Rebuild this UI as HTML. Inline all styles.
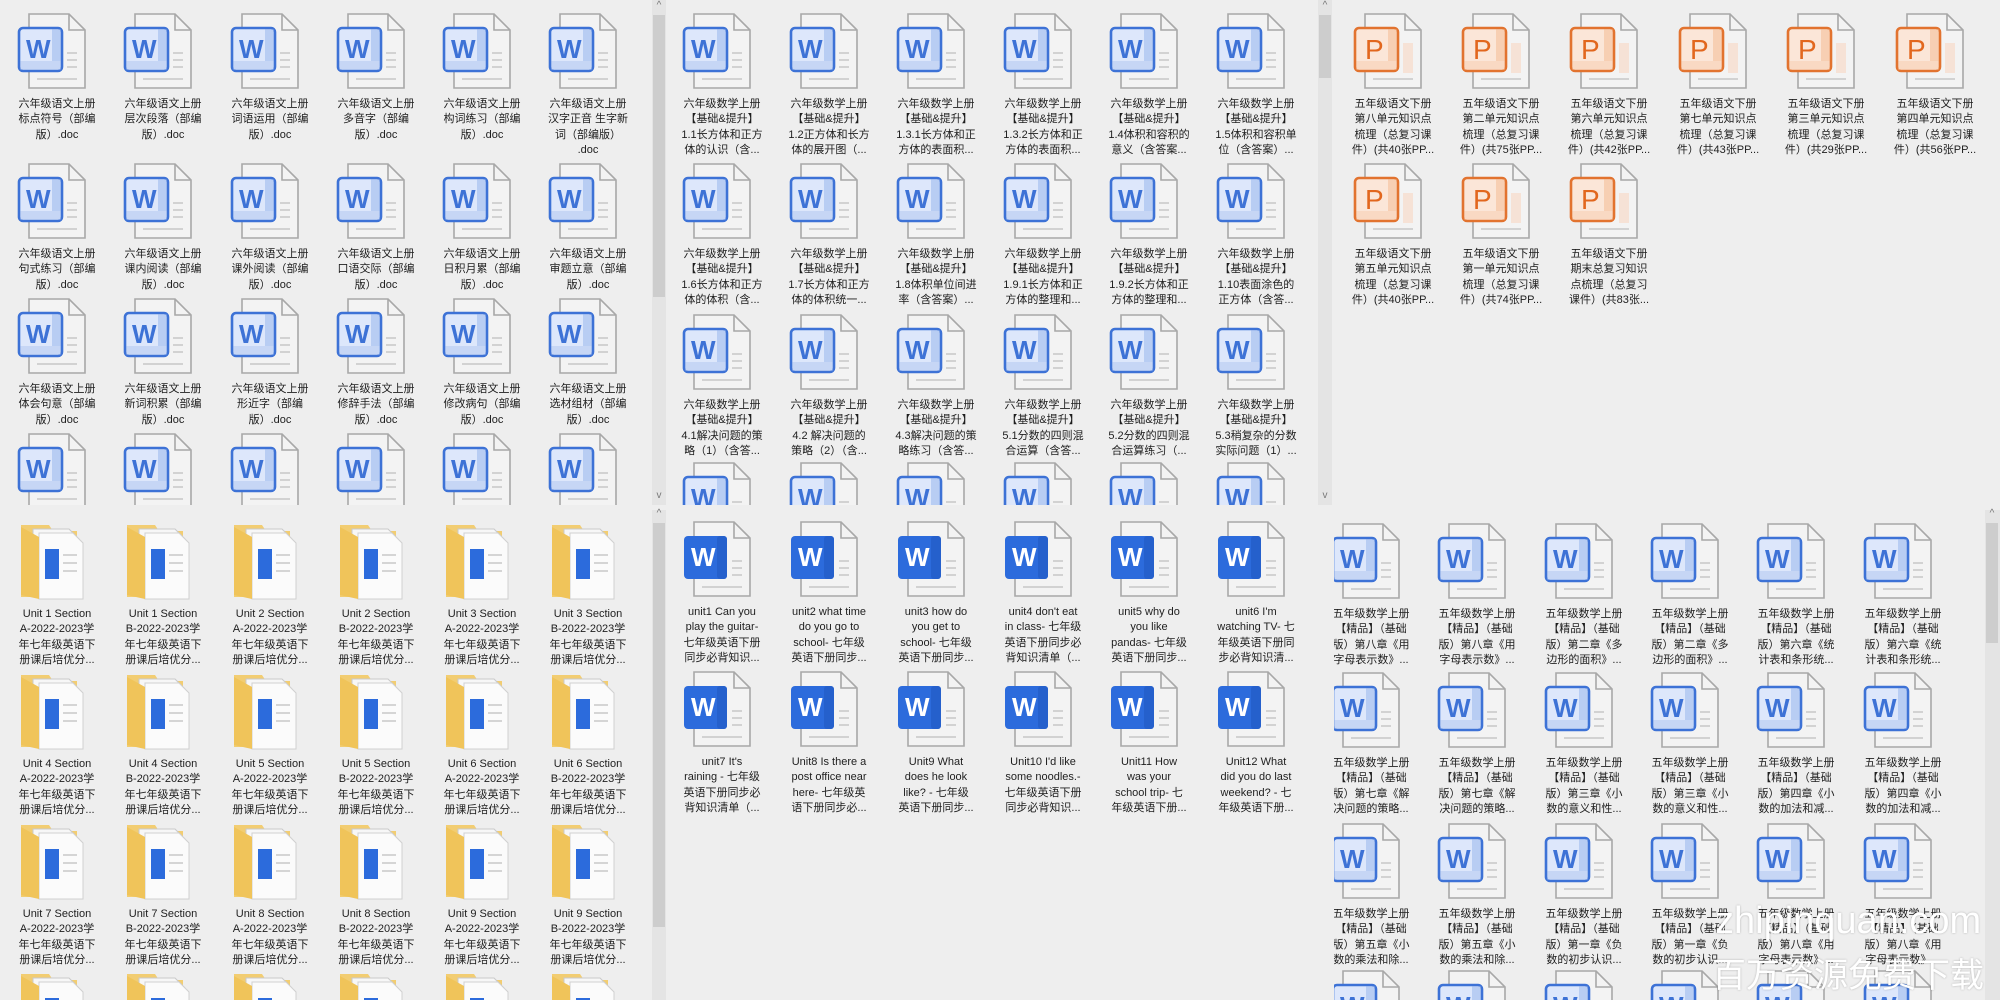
<!DOCTYPE html>
<html><head><meta charset="utf-8"><style>
html{margin:0;padding:0;width:2000px;height:1000px;overflow:hidden}
body{margin:0;padding:0;width:2000px;height:1000px;background:#eeeeee;position:relative;overflow:hidden;font-family:"Liberation Sans","Noto Sans CJK SC",sans-serif}
.pn{position:absolute;left:0;top:0;width:2000px;height:1000px;overflow:hidden}
.i{position:absolute;width:100px;height:28px}
.i svg{position:absolute;left:10px;top:0;width:70px;height:76px;overflow:visible}
.i p{position:absolute;left:-4px;top:84px;width:108px;margin:0;font-size:11px;line-height:15.3px;color:#1e1e1e;text-align:center;white-space:nowrap}
svg text{font:bold 26px "Liberation Sans",sans-serif;fill:#3d72d6}
.d svg text{fill:#fff}
.pp svg text{fill:#e2671e;font-weight:normal;font-size:28px}
.sb{position:absolute;background:#e4e4e4}
.th{position:absolute;background:#cdcdcd}
.ar{position:absolute;font-size:10px;color:#777;width:14px;text-align:center}
.wm{position:absolute;color:#fff;text-shadow:0 0 2px rgba(0,0,0,.25);white-space:nowrap}
</style></head><body>
<svg width="0" height="0" style="position:absolute">
<defs>
<g id="pg"><path d="M12 1h40l16 16v58H12z" fill="#f3f3f3" stroke="#a8a8a8" stroke-width="1.6"/><path d="M52 1v16h16" fill="none" stroke="#a8a8a8" stroke-width="1.6"/><path d="M50 40h10M50 47h10M50 54h10M20 66h40" stroke="#d2d2d2" stroke-width="2"/></g>
<g id="wl"><use href="#pg"/><rect x="2" y="15" width="43" height="43" rx="4" fill="#dde7fb" stroke="#3d72d6" stroke-width="2.6"/><rect x="35" y="16.5" width="8.5" height="40" fill="#b8cdf3"/><rect x="3.5" y="48" width="40" height="8.5" fill="#c6d6f5"/></g>
<g id="wd"><use href="#pg"/><rect x="2" y="15" width="43" height="43" rx="4" fill="#2c6bdc"/><rect x="35" y="15" width="10" height="43" rx="3" fill="#2560cc"/></g>
<g id="pp"><use href="#pg"/><rect x="2" y="15" width="43" height="43" rx="4" fill="#fbe6d8" stroke="#e2732f" stroke-width="2.6"/><rect x="35" y="16.5" width="8.5" height="40" fill="#f7cfb3"/><rect x="3.5" y="48" width="40" height="8.5" fill="#f9d9c3"/><rect x="50" y="30" width="10" height="30" fill="#f6e2d6"/></g>
<g id="fd"><path d="M4 2h28l4 6h24v66H4z" fill="#f2cd72"/><path d="M16 6h36l10 10v58H16z" fill="#f7f7f7" stroke="#c9c9c9"/><path d="M22 10h34l10 10v56H22z" fill="#fbfbfb" stroke="#d0d0d0"/><rect x="28" y="26" width="14" height="30" fill="#2c6bdc"/><path d="M46 32h14M46 40h14M46 48h14" stroke="#d5d5d5" stroke-width="2"/><path d="M4 4l18 10v62L4 72z" fill="#f0c45a"/></g>
</defs></svg>

<div class="sb" style="left:652px;top:0;width:14px;height:505px"></div><div class="th" style="left:653px;top:15px;width:12px;height:282px"></div>
<div class="ar" style="left:652px;top:0">^</div><div class="ar" style="left:652px;top:490px">v</div>
<div class="sb" style="left:652px;top:510px;width:14px;height:490px"></div><div class="th" style="left:653px;top:523px;width:12px;height:404px"></div>
<div class="ar" style="left:652px;top:508px">^</div>
<div class="sb" style="left:1318px;top:0;width:14px;height:505px"></div><div class="th" style="left:1319px;top:15px;width:12px;height:63px"></div>
<div class="ar" style="left:1318px;top:0">^</div><div class="ar" style="left:1318px;top:490px">v</div>
<div class="sb" style="left:1985px;top:510px;width:15px;height:490px"></div><div class="th" style="left:1986px;top:523px;width:12px;height:120px"></div>
<div class="ar" style="left:1985px;top:508px">^</div>

<div class="pn" style="clip-path:inset(0 1350px 495px 0)">
<div class="i" style="left:7px;top:13px"><svg><use href="#wl"/><text x="9" y="45">W</text></svg><p>六年级语文上册<br>标点符号（部编<br>版）.doc</p></div>
<div class="i" style="left:113px;top:13px"><svg><use href="#wl"/><text x="9" y="45">W</text></svg><p>六年级语文上册<br>层次段落（部编<br>版）.doc</p></div>
<div class="i" style="left:220px;top:13px"><svg><use href="#wl"/><text x="9" y="45">W</text></svg><p>六年级语文上册<br>词语运用（部编<br>版）.doc</p></div>
<div class="i" style="left:326px;top:13px"><svg><use href="#wl"/><text x="9" y="45">W</text></svg><p>六年级语文上册<br>多音字（部编<br>版）.doc</p></div>
<div class="i" style="left:432px;top:13px"><svg><use href="#wl"/><text x="9" y="45">W</text></svg><p>六年级语文上册<br>构词练习（部编<br>版）.doc</p></div>
<div class="i" style="left:538px;top:13px"><svg><use href="#wl"/><text x="9" y="45">W</text></svg><p>六年级语文上册<br>汉字正音 生字新<br>词（部编版）<br>.doc</p></div>
<div class="i" style="left:7px;top:163px"><svg><use href="#wl"/><text x="9" y="45">W</text></svg><p>六年级语文上册<br>句式练习（部编<br>版）.doc</p></div>
<div class="i" style="left:113px;top:163px"><svg><use href="#wl"/><text x="9" y="45">W</text></svg><p>六年级语文上册<br>课内阅读（部编<br>版）.doc</p></div>
<div class="i" style="left:220px;top:163px"><svg><use href="#wl"/><text x="9" y="45">W</text></svg><p>六年级语文上册<br>课外阅读（部编<br>版）.doc</p></div>
<div class="i" style="left:326px;top:163px"><svg><use href="#wl"/><text x="9" y="45">W</text></svg><p>六年级语文上册<br>口语交际（部编<br>版）.doc</p></div>
<div class="i" style="left:432px;top:163px"><svg><use href="#wl"/><text x="9" y="45">W</text></svg><p>六年级语文上册<br>日积月累（部编<br>版）.doc</p></div>
<div class="i" style="left:538px;top:163px"><svg><use href="#wl"/><text x="9" y="45">W</text></svg><p>六年级语文上册<br>审题立意（部编<br>版）.doc</p></div>
<div class="i" style="left:7px;top:298px"><svg><use href="#wl"/><text x="9" y="45">W</text></svg><p>六年级语文上册<br>体会句意（部编<br>版）.doc</p></div>
<div class="i" style="left:113px;top:298px"><svg><use href="#wl"/><text x="9" y="45">W</text></svg><p>六年级语文上册<br>新词积累（部编<br>版）.doc</p></div>
<div class="i" style="left:220px;top:298px"><svg><use href="#wl"/><text x="9" y="45">W</text></svg><p>六年级语文上册<br>形近字（部编<br>版）.doc</p></div>
<div class="i" style="left:326px;top:298px"><svg><use href="#wl"/><text x="9" y="45">W</text></svg><p>六年级语文上册<br>修辞手法（部编<br>版）.doc</p></div>
<div class="i" style="left:432px;top:298px"><svg><use href="#wl"/><text x="9" y="45">W</text></svg><p>六年级语文上册<br>修改病句（部编<br>版）.doc</p></div>
<div class="i" style="left:538px;top:298px"><svg><use href="#wl"/><text x="9" y="45">W</text></svg><p>六年级语文上册<br>选材组材（部编<br>版）.doc</p></div>
<div class="i" style="left:7px;top:433px"><svg><use href="#wl"/><text x="9" y="45">W</text></svg></div>
<div class="i" style="left:113px;top:433px"><svg><use href="#wl"/><text x="9" y="45">W</text></svg></div>
<div class="i" style="left:220px;top:433px"><svg><use href="#wl"/><text x="9" y="45">W</text></svg></div>
<div class="i" style="left:326px;top:433px"><svg><use href="#wl"/><text x="9" y="45">W</text></svg></div>
<div class="i" style="left:432px;top:433px"><svg><use href="#wl"/><text x="9" y="45">W</text></svg></div>
<div class="i" style="left:538px;top:433px"><svg><use href="#wl"/><text x="9" y="45">W</text></svg></div>
</div>

<div class="pn" style="clip-path:inset(0 682px 495px 668px)">
<div class="i" style="left:672px;top:13px"><svg><use href="#wl"/><text x="9" y="45">W</text></svg><p>六年级数学上册<br>【基础&amp;提升】<br>1.1长方体和正方<br>体的认识（含...</p></div>
<div class="i" style="left:779px;top:13px"><svg><use href="#wl"/><text x="9" y="45">W</text></svg><p>六年级数学上册<br>【基础&amp;提升】<br>1.2正方体和长方<br>体的展开图（...</p></div>
<div class="i" style="left:886px;top:13px"><svg><use href="#wl"/><text x="9" y="45">W</text></svg><p>六年级数学上册<br>【基础&amp;提升】<br>1.3.1长方体和正<br>方体的表面积...</p></div>
<div class="i" style="left:993px;top:13px"><svg><use href="#wl"/><text x="9" y="45">W</text></svg><p>六年级数学上册<br>【基础&amp;提升】<br>1.3.2长方体和正<br>方体的表面积...</p></div>
<div class="i" style="left:1099px;top:13px"><svg><use href="#wl"/><text x="9" y="45">W</text></svg><p>六年级数学上册<br>【基础&amp;提升】<br>1.4体积和容积的<br>意义（含答案...</p></div>
<div class="i" style="left:1206px;top:13px"><svg><use href="#wl"/><text x="9" y="45">W</text></svg><p>六年级数学上册<br>【基础&amp;提升】<br>1.5体积和容积单<br>位（含答案）...</p></div>
<div class="i" style="left:672px;top:163px"><svg><use href="#wl"/><text x="9" y="45">W</text></svg><p>六年级数学上册<br>【基础&amp;提升】<br>1.6长方体和正方<br>体的体积（含...</p></div>
<div class="i" style="left:779px;top:163px"><svg><use href="#wl"/><text x="9" y="45">W</text></svg><p>六年级数学上册<br>【基础&amp;提升】<br>1.7长方体和正方<br>体的体积统一...</p></div>
<div class="i" style="left:886px;top:163px"><svg><use href="#wl"/><text x="9" y="45">W</text></svg><p>六年级数学上册<br>【基础&amp;提升】<br>1.8体积单位间进<br>率（含答案）...</p></div>
<div class="i" style="left:993px;top:163px"><svg><use href="#wl"/><text x="9" y="45">W</text></svg><p>六年级数学上册<br>【基础&amp;提升】<br>1.9.1长方体和正<br>方体的整理和...</p></div>
<div class="i" style="left:1099px;top:163px"><svg><use href="#wl"/><text x="9" y="45">W</text></svg><p>六年级数学上册<br>【基础&amp;提升】<br>1.9.2长方体和正<br>方体的整理和...</p></div>
<div class="i" style="left:1206px;top:163px"><svg><use href="#wl"/><text x="9" y="45">W</text></svg><p>六年级数学上册<br>【基础&amp;提升】<br>1.10表面涂色的<br>正方体（含答...</p></div>
<div class="i" style="left:672px;top:314px"><svg><use href="#wl"/><text x="9" y="45">W</text></svg><p>六年级数学上册<br>【基础&amp;提升】<br>4.1解决问题的策<br>略（1）（含答...</p></div>
<div class="i" style="left:779px;top:314px"><svg><use href="#wl"/><text x="9" y="45">W</text></svg><p>六年级数学上册<br>【基础&amp;提升】<br>4.2 解决问题的<br>策略（2）（含...</p></div>
<div class="i" style="left:886px;top:314px"><svg><use href="#wl"/><text x="9" y="45">W</text></svg><p>六年级数学上册<br>【基础&amp;提升】<br>4.3解决问题的策<br>略练习（含答...</p></div>
<div class="i" style="left:993px;top:314px"><svg><use href="#wl"/><text x="9" y="45">W</text></svg><p>六年级数学上册<br>【基础&amp;提升】<br>5.1分数的四则混<br>合运算（含答...</p></div>
<div class="i" style="left:1099px;top:314px"><svg><use href="#wl"/><text x="9" y="45">W</text></svg><p>六年级数学上册<br>【基础&amp;提升】<br>5.2分数的四则混<br>合运算练习（...</p></div>
<div class="i" style="left:1206px;top:314px"><svg><use href="#wl"/><text x="9" y="45">W</text></svg><p>六年级数学上册<br>【基础&amp;提升】<br>5.3稍复杂的分数<br>实际问题（1）...</p></div>
<div class="i" style="left:672px;top:462px"><svg><use href="#wl"/><text x="9" y="45">W</text></svg></div>
<div class="i" style="left:779px;top:462px"><svg><use href="#wl"/><text x="9" y="45">W</text></svg></div>
<div class="i" style="left:886px;top:462px"><svg><use href="#wl"/><text x="9" y="45">W</text></svg></div>
<div class="i" style="left:993px;top:462px"><svg><use href="#wl"/><text x="9" y="45">W</text></svg></div>
<div class="i" style="left:1099px;top:462px"><svg><use href="#wl"/><text x="9" y="45">W</text></svg></div>
<div class="i" style="left:1206px;top:462px"><svg><use href="#wl"/><text x="9" y="45">W</text></svg></div>
</div>

<div class="pn" style="clip-path:inset(0 0 495px 1334px)">
<div class="i pp" style="left:1343px;top:13px"><svg><use href="#pp"/><text x="12" y="46">P</text></svg><p>五年级语文下册<br>第八单元知识点<br>梳理（总复习课<br>件）(共40张PP...</p></div>
<div class="i pp" style="left:1451px;top:13px"><svg><use href="#pp"/><text x="12" y="46">P</text></svg><p>五年级语文下册<br>第二单元知识点<br>梳理（总复习课<br>件）(共75张PP...</p></div>
<div class="i pp" style="left:1559px;top:13px"><svg><use href="#pp"/><text x="12" y="46">P</text></svg><p>五年级语文下册<br>第六单元知识点<br>梳理（总复习课<br>件）(共42张PP...</p></div>
<div class="i pp" style="left:1668px;top:13px"><svg><use href="#pp"/><text x="12" y="46">P</text></svg><p>五年级语文下册<br>第七单元知识点<br>梳理（总复习课<br>件）(共43张PP...</p></div>
<div class="i pp" style="left:1776px;top:13px"><svg><use href="#pp"/><text x="12" y="46">P</text></svg><p>五年级语文下册<br>第三单元知识点<br>梳理（总复习课<br>件）(共29张PP...</p></div>
<div class="i pp" style="left:1885px;top:13px"><svg><use href="#pp"/><text x="12" y="46">P</text></svg><p>五年级语文下册<br>第四单元知识点<br>梳理（总复习课<br>件）(共56张PP...</p></div>
<div class="i pp" style="left:1343px;top:163px"><svg><use href="#pp"/><text x="12" y="46">P</text></svg><p>五年级语文下册<br>第五单元知识点<br>梳理（总复习课<br>件）(共40张PP...</p></div>
<div class="i pp" style="left:1451px;top:163px"><svg><use href="#pp"/><text x="12" y="46">P</text></svg><p>五年级语文下册<br>第一单元知识点<br>梳理（总复习课<br>件）(共74张PP...</p></div>
<div class="i pp" style="left:1559px;top:163px"><svg><use href="#pp"/><text x="12" y="46">P</text></svg><p>五年级语文下册<br>期末总复习知识<br>点梳理（总复习<br>课件）(共83张...</p></div>
</div>

<div class="pn" style="clip-path:inset(510px 1350px 0 0)">
<div class="i" style="left:7px;top:523px"><svg><use href="#fd"/></svg><p>Unit 1 Section<br>A-2022-2023学<br>年七年级英语下<br>册课后培优分...</p></div>
<div class="i" style="left:113px;top:523px"><svg><use href="#fd"/></svg><p>Unit 1 Section<br>B-2022-2023学<br>年七年级英语下<br>册课后培优分...</p></div>
<div class="i" style="left:220px;top:523px"><svg><use href="#fd"/></svg><p>Unit 2 Section<br>A-2022-2023学<br>年七年级英语下<br>册课后培优分...</p></div>
<div class="i" style="left:326px;top:523px"><svg><use href="#fd"/></svg><p>Unit 2 Section<br>B-2022-2023学<br>年七年级英语下<br>册课后培优分...</p></div>
<div class="i" style="left:432px;top:523px"><svg><use href="#fd"/></svg><p>Unit 3 Section<br>A-2022-2023学<br>年七年级英语下<br>册课后培优分...</p></div>
<div class="i" style="left:538px;top:523px"><svg><use href="#fd"/></svg><p>Unit 3 Section<br>B-2022-2023学<br>年七年级英语下<br>册课后培优分...</p></div>
<div class="i" style="left:7px;top:673px"><svg><use href="#fd"/></svg><p>Unit 4 Section<br>A-2022-2023学<br>年七年级英语下<br>册课后培优分...</p></div>
<div class="i" style="left:113px;top:673px"><svg><use href="#fd"/></svg><p>Unit 4 Section<br>B-2022-2023学<br>年七年级英语下<br>册课后培优分...</p></div>
<div class="i" style="left:220px;top:673px"><svg><use href="#fd"/></svg><p>Unit 5 Section<br>A-2022-2023学<br>年七年级英语下<br>册课后培优分...</p></div>
<div class="i" style="left:326px;top:673px"><svg><use href="#fd"/></svg><p>Unit 5 Section<br>B-2022-2023学<br>年七年级英语下<br>册课后培优分...</p></div>
<div class="i" style="left:432px;top:673px"><svg><use href="#fd"/></svg><p>Unit 6 Section<br>A-2022-2023学<br>年七年级英语下<br>册课后培优分...</p></div>
<div class="i" style="left:538px;top:673px"><svg><use href="#fd"/></svg><p>Unit 6 Section<br>B-2022-2023学<br>年七年级英语下<br>册课后培优分...</p></div>
<div class="i" style="left:7px;top:823px"><svg><use href="#fd"/></svg><p>Unit 7 Section<br>A-2022-2023学<br>年七年级英语下<br>册课后培优分...</p></div>
<div class="i" style="left:113px;top:823px"><svg><use href="#fd"/></svg><p>Unit 7 Section<br>B-2022-2023学<br>年七年级英语下<br>册课后培优分...</p></div>
<div class="i" style="left:220px;top:823px"><svg><use href="#fd"/></svg><p>Unit 8 Section<br>A-2022-2023学<br>年七年级英语下<br>册课后培优分...</p></div>
<div class="i" style="left:326px;top:823px"><svg><use href="#fd"/></svg><p>Unit 8 Section<br>B-2022-2023学<br>年七年级英语下<br>册课后培优分...</p></div>
<div class="i" style="left:432px;top:823px"><svg><use href="#fd"/></svg><p>Unit 9 Section<br>A-2022-2023学<br>年七年级英语下<br>册课后培优分...</p></div>
<div class="i" style="left:538px;top:823px"><svg><use href="#fd"/></svg><p>Unit 9 Section<br>B-2022-2023学<br>年七年级英语下<br>册课后培优分...</p></div>
<div class="i" style="left:7px;top:972px"><svg><use href="#fd"/></svg></div>
<div class="i" style="left:113px;top:972px"><svg><use href="#fd"/></svg></div>
<div class="i" style="left:220px;top:972px"><svg><use href="#fd"/></svg></div>
<div class="i" style="left:326px;top:972px"><svg><use href="#fd"/></svg></div>
<div class="i" style="left:432px;top:972px"><svg><use href="#fd"/></svg></div>
<div class="i" style="left:538px;top:972px"><svg><use href="#fd"/></svg></div>
</div>

<div class="pn" style="clip-path:inset(510px 668px 0 668px)">
<div class="i d" style="left:672px;top:521px"><svg><use href="#wd"/><text x="9" y="45">W</text></svg><p>unit1 Can you<br>play the guitar-<br>七年级英语下册<br>同步必背知识...</p></div>
<div class="i d" style="left:779px;top:521px"><svg><use href="#wd"/><text x="9" y="45">W</text></svg><p>unit2 what time<br>do you go to<br>school- 七年级<br>英语下册同步...</p></div>
<div class="i d" style="left:886px;top:521px"><svg><use href="#wd"/><text x="9" y="45">W</text></svg><p>unit3 how do<br>you get to<br>school- 七年级<br>英语下册同步...</p></div>
<div class="i d" style="left:993px;top:521px"><svg><use href="#wd"/><text x="9" y="45">W</text></svg><p>unit4 don't eat<br>in class- 七年级<br>英语下册同步必<br>背知识清单（...</p></div>
<div class="i d" style="left:1099px;top:521px"><svg><use href="#wd"/><text x="9" y="45">W</text></svg><p>unit5 why do<br>you like<br>pandas- 七年级<br>英语下册同步...</p></div>
<div class="i d" style="left:1206px;top:521px"><svg><use href="#wd"/><text x="9" y="45">W</text></svg><p>unit6 I'm<br>watching TV- 七<br>年级英语下册同<br>步必背知识清...</p></div>
<div class="i d" style="left:672px;top:671px"><svg><use href="#wd"/><text x="9" y="45">W</text></svg><p>unit7 It's<br>raining - 七年级<br>英语下册同步必<br>背知识清单（...</p></div>
<div class="i d" style="left:779px;top:671px"><svg><use href="#wd"/><text x="9" y="45">W</text></svg><p>Unit8 Is there a<br>post office near<br>here- 七年级英<br>语下册同步必...</p></div>
<div class="i d" style="left:886px;top:671px"><svg><use href="#wd"/><text x="9" y="45">W</text></svg><p>Unit9 What<br>does he look<br>like? - 七年级<br>英语下册同步...</p></div>
<div class="i d" style="left:993px;top:671px"><svg><use href="#wd"/><text x="9" y="45">W</text></svg><p>Unit10 I'd like<br>some noodles.-<br>七年级英语下册<br>同步必背知识...</p></div>
<div class="i d" style="left:1099px;top:671px"><svg><use href="#wd"/><text x="9" y="45">W</text></svg><p>Unit11 How<br>was your<br>school trip- 七<br>年级英语下册...</p></div>
<div class="i d" style="left:1206px;top:671px"><svg><use href="#wd"/><text x="9" y="45">W</text></svg><p>Unit12 What<br>did you do last<br>weekend? - 七<br>年级英语下册...</p></div>
</div>

<div class="pn" style="clip-path:inset(510px 15px 0 1334px)">
<div class="i" style="left:1321px;top:523px"><svg><use href="#wl"/><text x="9" y="45">W</text></svg><p>五年级数学上册<br>【精品】（基础<br>版）第八章《用<br>字母表示数》...</p></div>
<div class="i" style="left:1427px;top:523px"><svg><use href="#wl"/><text x="9" y="45">W</text></svg><p>五年级数学上册<br>【精品】（基础<br>版）第八章《用<br>字母表示数》...</p></div>
<div class="i" style="left:1534px;top:523px"><svg><use href="#wl"/><text x="9" y="45">W</text></svg><p>五年级数学上册<br>【精品】（基础<br>版）第二章《多<br>边形的面积》...</p></div>
<div class="i" style="left:1640px;top:523px"><svg><use href="#wl"/><text x="9" y="45">W</text></svg><p>五年级数学上册<br>【精品】（基础<br>版）第二章《多<br>边形的面积》...</p></div>
<div class="i" style="left:1746px;top:523px"><svg><use href="#wl"/><text x="9" y="45">W</text></svg><p>五年级数学上册<br>【精品】（基础<br>版）第六章《统<br>计表和条形统...</p></div>
<div class="i" style="left:1853px;top:523px"><svg><use href="#wl"/><text x="9" y="45">W</text></svg><p>五年级数学上册<br>【精品】（基础<br>版）第六章《统<br>计表和条形统...</p></div>
<div class="i" style="left:1321px;top:672px"><svg><use href="#wl"/><text x="9" y="45">W</text></svg><p>五年级数学上册<br>【精品】（基础<br>版）第七章《解<br>决问题的策略...</p></div>
<div class="i" style="left:1427px;top:672px"><svg><use href="#wl"/><text x="9" y="45">W</text></svg><p>五年级数学上册<br>【精品】（基础<br>版）第七章《解<br>决问题的策略...</p></div>
<div class="i" style="left:1534px;top:672px"><svg><use href="#wl"/><text x="9" y="45">W</text></svg><p>五年级数学上册<br>【精品】（基础<br>版）第三章《小<br>数的意义和性...</p></div>
<div class="i" style="left:1640px;top:672px"><svg><use href="#wl"/><text x="9" y="45">W</text></svg><p>五年级数学上册<br>【精品】（基础<br>版）第三章《小<br>数的意义和性...</p></div>
<div class="i" style="left:1746px;top:672px"><svg><use href="#wl"/><text x="9" y="45">W</text></svg><p>五年级数学上册<br>【精品】（基础<br>版）第四章《小<br>数的加法和减...</p></div>
<div class="i" style="left:1853px;top:672px"><svg><use href="#wl"/><text x="9" y="45">W</text></svg><p>五年级数学上册<br>【精品】（基础<br>版）第四章《小<br>数的加法和减...</p></div>
<div class="i" style="left:1321px;top:823px"><svg><use href="#wl"/><text x="9" y="45">W</text></svg><p>五年级数学上册<br>【精品】（基础<br>版）第五章《小<br>数的乘法和除...</p></div>
<div class="i" style="left:1427px;top:823px"><svg><use href="#wl"/><text x="9" y="45">W</text></svg><p>五年级数学上册<br>【精品】（基础<br>版）第五章《小<br>数的乘法和除...</p></div>
<div class="i" style="left:1534px;top:823px"><svg><use href="#wl"/><text x="9" y="45">W</text></svg><p>五年级数学上册<br>【精品】（基础<br>版）第一章《负<br>数的初步认识...</p></div>
<div class="i" style="left:1640px;top:823px"><svg><use href="#wl"/><text x="9" y="45">W</text></svg><p>五年级数学上册<br>【精品】（基础<br>版）第一章《负<br>数的初步认识...</p></div>
<div class="i" style="left:1746px;top:823px"><svg><use href="#wl"/><text x="9" y="45">W</text></svg><p>五年级数学上册<br>【精品】（基础<br>版）第八章《用<br>字母表示数》...</p></div>
<div class="i" style="left:1853px;top:823px"><svg><use href="#wl"/><text x="9" y="45">W</text></svg><p>五年级数学上册<br>【精品】（基础<br>版）第八章《用<br>字母表示数》...</p></div>
<div class="i" style="left:1321px;top:970px"><svg><use href="#wl"/><text x="9" y="45">W</text></svg></div>
<div class="i" style="left:1427px;top:970px"><svg><use href="#wl"/><text x="9" y="45">W</text></svg></div>
<div class="i" style="left:1534px;top:970px"><svg><use href="#wl"/><text x="9" y="45">W</text></svg></div>
<div class="i" style="left:1640px;top:970px"><svg><use href="#wl"/><text x="9" y="45">W</text></svg></div>
<div class="i" style="left:1746px;top:970px"><svg><use href="#wl"/><text x="9" y="45">W</text></svg></div>
<div class="i" style="left:1853px;top:970px"><svg><use href="#wl"/><text x="9" y="45">W</text></svg></div>
</div>

<div class="wm" style="left:1715px;top:900px;font-size:38px;font-family:'Liberation Sans',sans-serif">zhipinquan.com</div>
<div class="wm" style="left:1712px;top:948px;font-size:34px;font-family:'Liberation Sans','Noto Sans CJK SC',sans-serif">百万资源免费下载</div>
</body></html>
